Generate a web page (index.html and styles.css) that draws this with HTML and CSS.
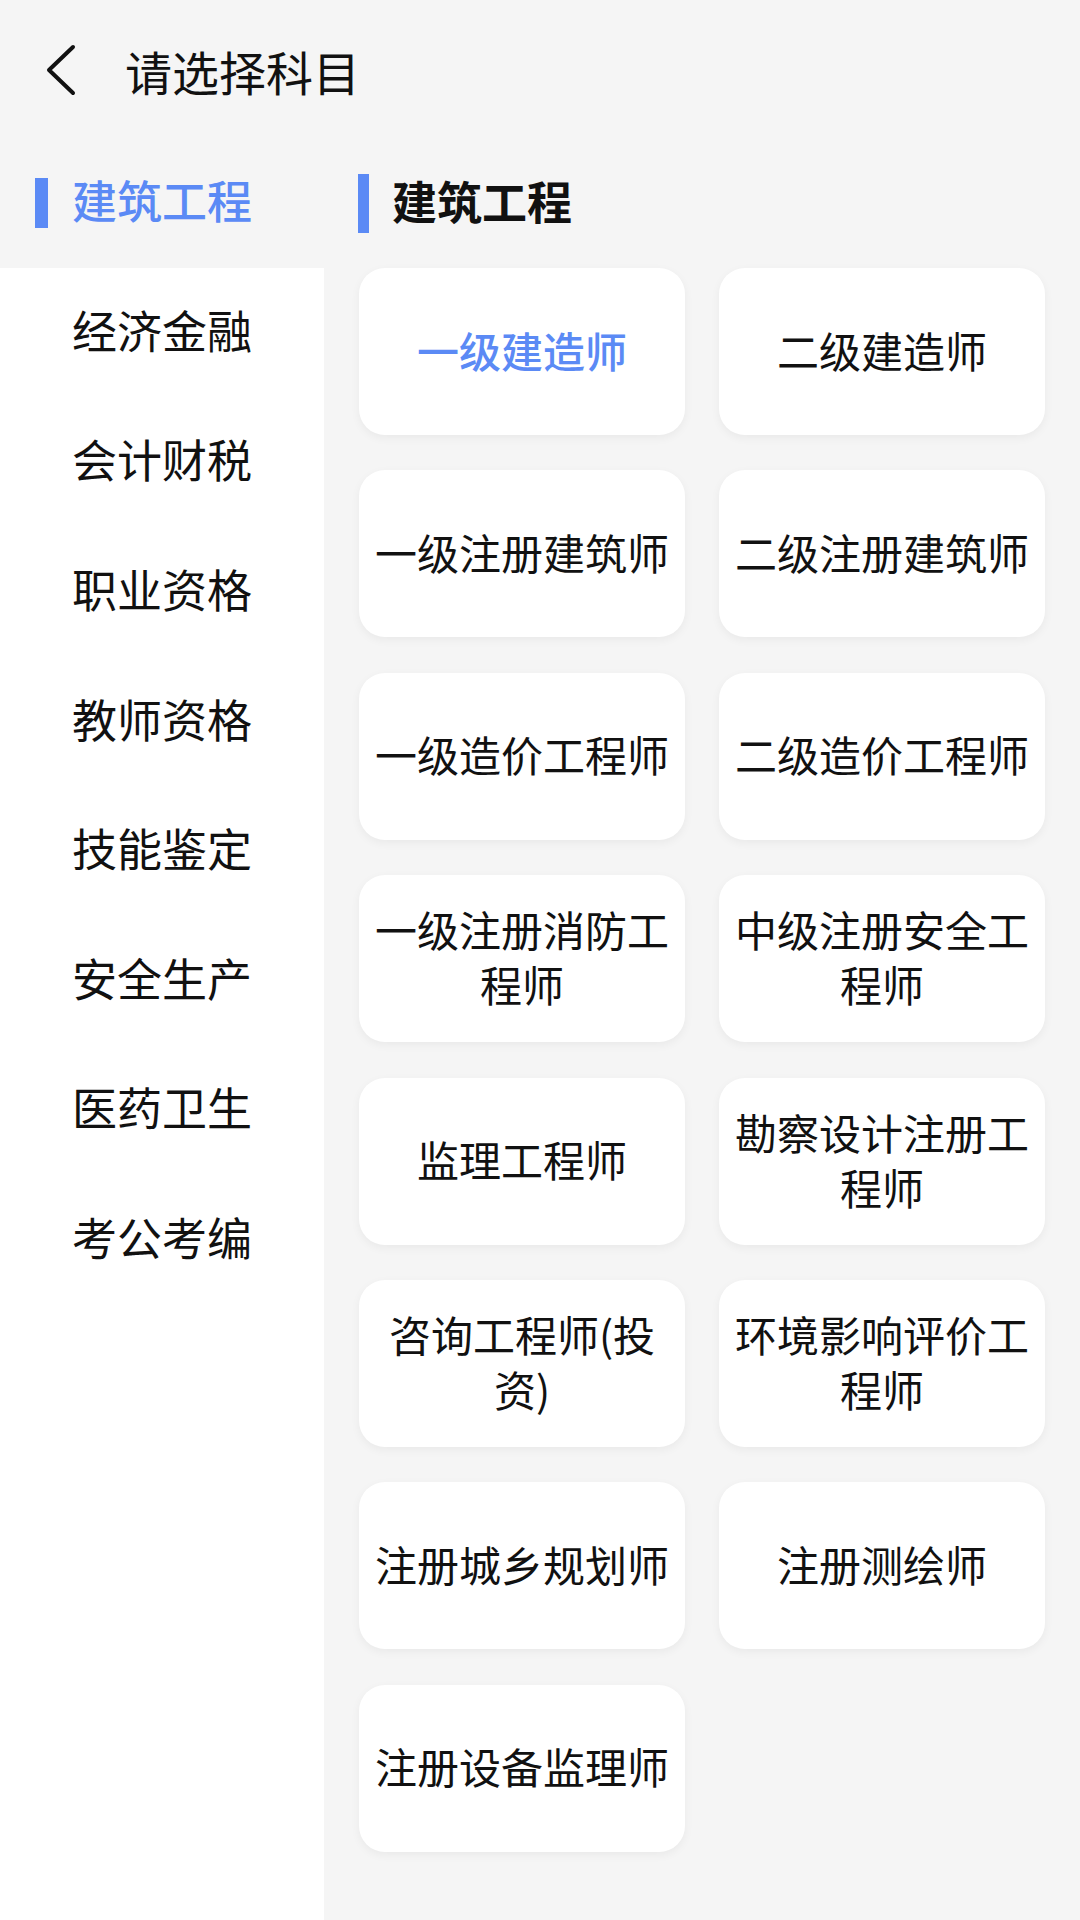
FILE: index.html
```html
<!DOCTYPE html>
<html lang="zh-CN">
<head>
<meta charset="utf-8">
<title>请选择科目</title>
<link rel="stylesheet" href="styles.css">
</head>
<body>
<div class="page">
  <header class="topbar">
    <svg class="back" width="34" height="52" viewBox="0 0 34 52">
      <polyline points="28,3 4,26 28,49" fill="none" stroke="#111" stroke-width="4" stroke-linecap="round" stroke-linejoin="round"/>
    </svg>
    <div class="title">请选择科目</div>
  </header>
  <div class="main">
    <nav class="sidebar">
      <div class="side-item active"><span class="mark"></span><span class="label">建筑工程</span></div>
      <div class="side-item"><span class="mark"></span><span class="label">经济金融</span></div>
      <div class="side-item"><span class="mark"></span><span class="label">会计财税</span></div>
      <div class="side-item"><span class="mark"></span><span class="label">职业资格</span></div>
      <div class="side-item"><span class="mark"></span><span class="label">教师资格</span></div>
      <div class="side-item"><span class="mark"></span><span class="label">技能鉴定</span></div>
      <div class="side-item"><span class="mark"></span><span class="label">安全生产</span></div>
      <div class="side-item"><span class="mark"></span><span class="label">医药卫生</span></div>
      <div class="side-item"><span class="mark"></span><span class="label">考公考编</span></div>
    </nav>
    <section class="content">
      <div class="section-head"><span class="head-mark"></span><span class="head-text">建筑工程</span></div>
      <div class="grid">
        <div class="card active">一级建造师</div>
        <div class="card">二级建造师</div>
        <div class="card">一级注册建筑师</div>
        <div class="card">二级注册建筑师</div>
        <div class="card">一级造价工程师</div>
        <div class="card">二级造价工程师</div>
        <div class="card">一级注册消防工程师</div>
        <div class="card">中级注册安全工程师</div>
        <div class="card">监理工程师</div>
        <div class="card">勘察设计注册工程师</div>
        <div class="card">咨询工程师(投资)</div>
        <div class="card">环境影响评价工程师</div>
        <div class="card">注册城乡规划师</div>
        <div class="card">注册测绘师</div>
        <div class="card">注册设备监理师</div>
      </div>
    </section>
  </div>
</div>
</body>
</html>
```

FILE: styles.css
```css
* { box-sizing: border-box; }
html, body {
  margin: 0;
  padding: 0;
  background: #f5f5f5;
}
body {
  font-family: "Noto Sans CJK SC", "Noto Sans", sans-serif;
  color: #111;
}
.page {
  width: 1080px;
  min-height: 1920px;
  display: flex;
  flex-direction: column;
}
.topbar {
  height: 138px;
  padding-top: 4px;
  display: flex;
  align-items: center;
}
.back {
  margin-left: 45px;
  margin-top: -2px;
  flex: none;
}
.title {
  margin-left: 46px;
  font-size: 47px;
  line-height: 60px;
  color: #111;
}
.main {
  flex: 1;
  display: flex;
}
.sidebar {
  width: 324px;
  flex: none;
  background: #fff;
  display: flex;
  flex-direction: column;
}
.side-item {
  height: 129.6px;
  display: flex;
  align-items: center;
  padding-left: 35px;
  gap: 24px;
  background: #fff;
}
.side-item.active {
  background: #f5f5f5;
}
.mark {
  width: 13px;
  height: 50px;
  background: #5b8af5;
  visibility: hidden;
}
.side-item.active .mark {
  visibility: visible;
}
.label {
  font-size: 45px;
  line-height: 56px;
  padding-bottom: 5px;
  color: #111;
}
.side-item.active .label {
  color: #5b8af5;
  font-weight: 500;
}
.content {
  flex: 1;
  padding: 0 35px 0 34px;
}
.section-head {
  height: 130px;
  display: flex;
  align-items: center;
  gap: 23px;
}
.head-mark {
  width: 11px;
  height: 59px;
  background: #5b8af5;
}
.head-text {
  font-size: 45px;
  line-height: 56px;
  padding-bottom: 5px;
  font-weight: 700;
  color: #111;
}
.grid {
  display: grid;
  grid-template-columns: 1fr 1fr;
  column-gap: 34px;
  row-gap: 35.4px;
  padding-left: 1px;
}
.card {
  height: 167px;
  background: #fff;
  border-radius: 26px;
  box-shadow: 0 3px 10px rgba(0, 0, 0, 0.05);
  display: flex;
  align-items: center;
  justify-content: center;
  text-align: center;
  padding: 0 16px 5px;
  font-size: 42px;
  line-height: 55px;
  color: #111;
}
.card.active {
  color: #5b8af5;
  font-weight: 500;
}
```
